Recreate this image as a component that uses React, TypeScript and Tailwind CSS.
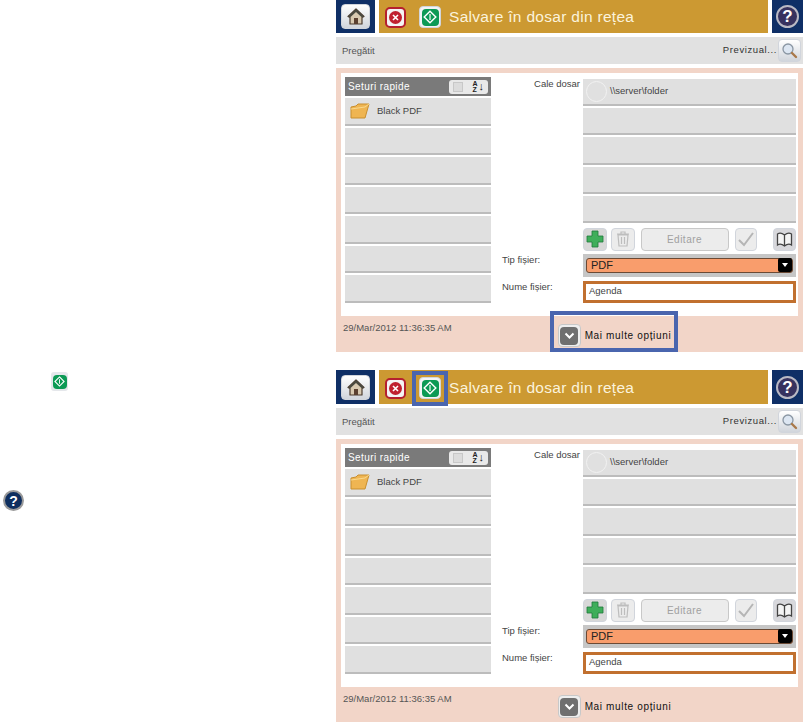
const IconFrame = ({ className = '', children }: { className?: string; children: React.ReactNode }) => (
  <div className={`flex items-center justify-center rounded-[4px] border border-gray-300 bg-gradient-to-b from-white to-gray-300 ${className}`}>
    {children}
  </div>
);

const HomeIcon = () => (
  <svg width="18" height="17" viewBox="0 0 18 17">
    <path d="M9 1 L1 8.500 L3 9.500 L3 16 L15 16 L15 9.500 L17 8.500 Z" fill="#d8c9b0" stroke="#4b3b2e" strokeWidth="1.200" strokeLinejoin="round" />
    <path d="M9 1 L1 8.500 L3 9.500 L9 4 L15 9.500 L17 8.500 Z" fill="#4a4a40" />
    <rect x="7" y="10" width="4" height="6" fill="#5b4030" />
  </svg>
);

const StopIcon = () => (
  <div className="flex h-[21px] w-[21px] items-center justify-center rounded-[5px] border-2 border-[#b5202e] bg-[#f4f4f4]">
    <div className="flex h-[13px] w-[13px] items-center justify-center rounded-full bg-[#c0202f]">
      <svg width="7" height="7" viewBox="0 0 7 7">
        <path d="M1 1 L6 6 M6 1 L1 6" stroke="#fff" strokeWidth="1.600" />
      </svg>
    </div>
  </div>
);

const StartIcon = ({ size = 16 }: { size?: number }) => (
  <div className="flex items-center justify-center rounded-[4px] bg-[#0c9a55]" style={{ width: size, height: size }}>
    <svg width={size - 3} height={size - 3} viewBox="0 0 12 12">
      <path d="M6 1 L11 6 L6 11 L1 6 Z" fill="none" stroke="#fff" strokeWidth="1.200" />
      <path d="M6 3.500 L6 8.500" stroke="#fff" strokeWidth="1" />
    </svg>
  </div>
);

const FolderIcon = () => (
  <svg width="20" height="17" viewBox="0 0 20 17">
    <path d="M1 5 L1 16 L15 16 L19 2 L8 2 L6 4 Z" fill="#efb552" stroke="#c98f2e" strokeWidth="1" strokeLinejoin="round" />
    <path d="M1 7 L15 5 L19 2" fill="none" stroke="#f9d98d" strokeWidth="1" />
  </svg>
);

const ListRow = ({ label }: { label?: string }) => (
  <div className="flex h-[27.5px] items-center gap-[7px] border-b-2 border-[#bcbcbc] bg-[#e0e0e0] pl-[5px] text-[9.5px] text-[#444]">
    {label && <FolderIcon />}
    {label && <span>{label}</span>}
  </div>
);

const PathRow = ({ label }: { label?: string }) => (
  <div className="flex h-[27.2px] items-center border-b-2 border-[#bcbcbc] bg-[#e0e0e0] pl-[3px] text-[9.5px] text-[#444]">
    {label && <div className="mr-[3px] h-[21px] w-[21px] rounded-full border border-[#f2f2f2]" />}
    {label && <span>{label}</span>}
  </div>
);

const Screen = ({ moreHighlight, startHighlight }: { moreHighlight?: boolean; startHighlight?: boolean }) => (
  <div className="relative h-[353px] w-[467px] shrink-0">
    {/* top bar */}
    <div className="flex h-[34px] gap-[4px]">
      <div className="flex w-[39px] items-center justify-center bg-[#0f2f66]">
        <IconFrame className="h-[25px] w-[29px] border-[#aaa] from-[#e4e4e4] to-[#a4a4a4]">
          <HomeIcon />
        </IconFrame>
      </div>
      <div className="flex w-[389px] items-center bg-[#cc9932] pt-[2px] pl-[6px]">
        <StopIcon />
        <div className="ml-[13px] flex h-[22px] w-[22px] items-center justify-center rounded-[4px] border border-gray-300 bg-gray-100">
          <StartIcon size={17} />
        </div>
        <span className="ml-[8px] text-[15.5px] leading-none tracking-[0.3px] text-[#fbf3dc]">Salvare în dosar din rețea</span>
      </div>
      <div className="flex w-[31px] items-center justify-center bg-[#0f2f66]">
        <div className="flex h-[23px] w-[23px] items-center justify-center rounded-full border-2 border-[#b9b9c4] bg-[#37325f] text-[17px] leading-none font-bold text-white">?</div>
      </div>
    </div>

    {/* status */}
    <div className="mt-[4px] flex h-[27px] items-center justify-between bg-[#e1e1e1] pr-[2px] pl-[6px]">
      <span className="pt-[2px] text-[9.5px] text-[#555]">Pregătit</span>
      <div className="flex items-center gap-[1px]">
        <span className="text-[9.5px] tracking-[0.6px] text-[#333]">Previzual...</span>
        <IconFrame className="h-[23px] w-[23px] border-[#9a9a9a]">
          <svg width="17" height="17" viewBox="0 0 17 17">
            <circle cx="7" cy="7" r="5" fill="#dce6f2" stroke="#8a96a3" strokeWidth="1.300" />
            <path d="M11 11 L15 15" stroke="#a9794a" strokeWidth="2.400" strokeLinecap="round" />
          </svg>
        </IconFrame>
      </div>
    </div>

    {/* panel */}
    <div className="mt-[4px] h-[284px] bg-[#f2d5c8] px-[5px] pt-[5px]">
      <div className="flex h-[243px] bg-white pt-[4px] pl-[4px]">
        <div className="w-[146px] shrink-0">
          <div className="flex h-[19px] items-center justify-between bg-[#7a7a7a] pr-[3px] pl-[3px]">
            <span className="text-[10px] tracking-[0.4px] text-white">Seturi rapide</span>
            <div className="flex h-[14px] w-[39px] items-center justify-between rounded-[3px] bg-[#e9e9e9] px-[4px]">
              <div className="h-[10px] w-[10px] border border-[#c8c8c8] bg-[#dcdcdc]" />
              <div className="flex items-center gap-[1px]">
                <span className="flex flex-col text-[7px] leading-[6px] font-bold text-[#222]">
                  <span>A</span>
                  <span>Z</span>
                </span>
                <span className="text-[11px] leading-none font-bold text-[#222]">↓</span>
              </div>
            </div>
          </div>
          <div className="mt-[2px] flex flex-col gap-[2px]">
            <ListRow label="Black PDF" />
            <ListRow />
            <ListRow />
            <ListRow />
            <ListRow />
            <ListRow />
            <ListRow />
          </div>
        </div>

        <div className="ml-[11px] w-[81px] shrink-0 text-[9.5px] text-[#444]">
          <div className="mt-[1px] h-[11px] pr-[3px] text-right leading-[11px]">Cale dosar</div>
          <div className="mt-[164px] h-[27px] leading-[14px]">Tip fișier:</div>
          <div className="leading-[14px]">Nume fișier:</div>
        </div>

        <div className="w-[213px] shrink-0 pt-[2px]">
          <div className="flex flex-col gap-[2px]">
            <PathRow label="\\server\folder" />
            <PathRow />
            <PathRow />
            <PathRow />
            <PathRow />
          </div>
          <div className="mt-[5px] flex h-[23px] items-center">
            <IconFrame className="h-[23px] w-[24px] border-[#888] bg-none bg-[#d8d8d8]">
              <svg width="18" height="18" viewBox="0 0 18 18">
                <path d="M6 1 H12 V6 H17 V12 H12 V17 H6 V12 H1 V6 H6 Z" fill="#3fae5a" stroke="#1f7a3a" strokeWidth="0.800" />
              </svg>
            </IconFrame>
            <IconFrame className="ml-[4px] h-[23px] w-[24px] border-[#cfcfcf] bg-none bg-[#ececec]">
              <svg width="14" height="16" viewBox="0 0 14 16">
                <path d="M2 4 H12 L11 15 H3 Z M1 3 H13 M5 3 V1 H9 V3 M5.500 6 V13 M8.500 6 V13" fill="none" stroke="#bdbdbd" strokeWidth="1.200" />
              </svg>
            </IconFrame>
            <div className="ml-[6px] flex h-[23px] w-[89px] items-center justify-center rounded-[4px] border border-[#c8c8c8] bg-[#ececec] text-[10px] tracking-[0.5px] text-[#a0a0a0]">Editare</div>
            <IconFrame className="ml-[6px] h-[23px] w-[23px] border-[#c8c8c8] bg-none bg-[#ececec]">
              <svg width="18" height="16" viewBox="0 0 18 16">
                <path d="M2 9 L7 14 L16 2" fill="none" stroke="#b5b5b5" strokeWidth="2" />
              </svg>
            </IconFrame>
            <IconFrame className="ml-[16px] h-[23px] w-[23px] border-[#888] bg-none bg-[#d8d8dc]">
              <svg width="17" height="15" viewBox="0 0 17 15">
                <path d="M8.500 3 C6 1 3 1 1.500 2 V13 C3 12 6 12 8.500 14 C11 12 14 12 15.500 13 V2 C14 1 11 1 8.500 3 Z M8.500 3 V14" fill="#f4f4f4" stroke="#444" strokeWidth="1.300" />
              </svg>
            </IconFrame>
          </div>
          <div className="mt-[3px] flex h-[23px] items-center bg-[#c6c6c6] px-[3px]">
            <div className="flex h-[15px] w-full items-center justify-between rounded-[3px] border border-[#6b4a35] bg-[#f99d6c] pl-[4px]">
              <span className="text-[11px] leading-none text-[#222]">PDF</span>
              <div className="flex h-[14px] w-[14px] items-center justify-center rounded-[2px] bg-black">
                <div className="h-0 w-0 border-x-[3px] border-t-[4px] border-x-transparent border-t-white" />
              </div>
            </div>
          </div>
          <div className="mt-[4px] flex h-[22px] items-center border-[3px] border-[#c1702f] bg-white pb-[1px] pl-[3px] text-[9.5px] text-[#444]">Agenda</div>
        </div>
      </div>

      <div className="flex h-[36px] items-start">
        <span className="mt-[7px] ml-[2px] text-[9.5px] leading-[10px] text-[#555]">29/Mar/2012 11:36:35 AM</span>
        <div className="mt-[8px] ml-[106px] flex items-center gap-[4px]">
          <div className="flex h-[23px] w-[23px] items-center justify-center rounded-[4px] border border-[#c8c8c8] bg-[#eee]">
            <div className="flex h-[18px] w-[18px] items-center justify-center rounded-[4px] bg-[#6f6f6f]">
              <svg width="11" height="8" viewBox="0 0 11 8">
                <path d="M1.500 1.500 L5.500 5.500 L9.500 1.500" fill="none" stroke="#fff" strokeWidth="2" />
              </svg>
            </div>
          </div>
          <span className="text-[10px] tracking-[0.65px] text-[#111]">Mai multe opțiuni</span>
        </div>
      </div>
    </div>

    {moreHighlight && <div className="absolute top-[312px] left-[214px] h-[41px] w-[128px] border-[4px] border-[#4a65ae]" />}
    {startHighlight && <div className="absolute top-[1px] left-[76px] h-[35px] w-[36px] border-[4px] border-[#4a65ae]" />}
  </div>
);

export default function App() {
  return (
    <div className="flex h-[722px] w-[805px] overflow-hidden bg-white font-['Liberation_Sans',Arial,sans-serif]">
      <div className="w-[336px] shrink-0">
        <div className="mt-[372px] ml-[51px] flex h-[19px] w-[17px] items-center justify-center rounded-[3px] bg-gray-200">
          <StartIcon size={14} />
        </div>
        <div className="mt-[99px] ml-[3px] flex h-[21px] w-[21px] items-center justify-center rounded-full border-2 border-[#9a9a9a] bg-[#0f2f5f] text-[14px] leading-none font-bold text-white">?</div>
      </div>
      <div className="-mt-[1px] flex w-[467px] shrink-0 flex-col gap-[18px]">
        <Screen moreHighlight />
        <Screen startHighlight />
      </div>
    </div>
  );
}
